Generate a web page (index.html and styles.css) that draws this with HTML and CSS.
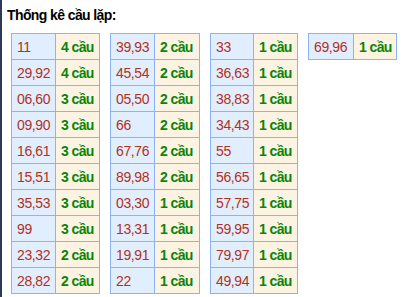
FILE: index.html
```html
<!DOCTYPE html>
<html lang="vi">
<head>
<meta charset="utf-8">
<link rel="stylesheet" href="styles.css">
</head>
<body>
<div class="page">
  <div class="title">Thống kê cầu lặp:</div>
  <div class="tables">
    <table class="t t1">
      <tr><td class="n">11</td><td class="c">4 cầu</td></tr>
      <tr><td class="n">29,92</td><td class="c">4 cầu</td></tr>
      <tr><td class="n">06,60</td><td class="c">3 cầu</td></tr>
      <tr><td class="n">09,90</td><td class="c">3 cầu</td></tr>
      <tr><td class="n">16,61</td><td class="c">3 cầu</td></tr>
      <tr><td class="n">15,51</td><td class="c">3 cầu</td></tr>
      <tr><td class="n">35,53</td><td class="c">3 cầu</td></tr>
      <tr><td class="n">99</td><td class="c">3 cầu</td></tr>
      <tr><td class="n">23,32</td><td class="c">2 cầu</td></tr>
      <tr><td class="n">28,82</td><td class="c">2 cầu</td></tr>
    </table>
    <table class="t t2">
      <tr><td class="n">39,93</td><td class="c">2 cầu</td></tr>
      <tr><td class="n">45,54</td><td class="c">2 cầu</td></tr>
      <tr><td class="n">05,50</td><td class="c">2 cầu</td></tr>
      <tr><td class="n">66</td><td class="c">2 cầu</td></tr>
      <tr><td class="n">67,76</td><td class="c">2 cầu</td></tr>
      <tr><td class="n">89,98</td><td class="c">2 cầu</td></tr>
      <tr><td class="n">03,30</td><td class="c">1 cầu</td></tr>
      <tr><td class="n">13,31</td><td class="c">1 cầu</td></tr>
      <tr><td class="n">19,91</td><td class="c">1 cầu</td></tr>
      <tr><td class="n">22</td><td class="c">1 cầu</td></tr>
    </table>
    <table class="t t3">
      <tr><td class="n">33</td><td class="c">1 cầu</td></tr>
      <tr><td class="n">36,63</td><td class="c">1 cầu</td></tr>
      <tr><td class="n">38,83</td><td class="c">1 cầu</td></tr>
      <tr><td class="n">34,43</td><td class="c">1 cầu</td></tr>
      <tr><td class="n">55</td><td class="c">1 cầu</td></tr>
      <tr><td class="n">56,65</td><td class="c">1 cầu</td></tr>
      <tr><td class="n">57,75</td><td class="c">1 cầu</td></tr>
      <tr><td class="n">59,95</td><td class="c">1 cầu</td></tr>
      <tr><td class="n">79,97</td><td class="c">1 cầu</td></tr>
      <tr><td class="n">49,94</td><td class="c">1 cầu</td></tr>
    </table>
    <table class="t t4">
      <tr><td class="n">69,96</td><td class="c">1 cầu</td></tr>
    </table>
  </div>
</div>
</body>
</html>
```
FILE: styles.css
```css
html, body {
  margin: 0;
  padding: 0;
  background: #ffffff;
}
.page {
  box-sizing: border-box;
  min-height: 297px;
  border-left: 2px solid #2c3a56;
  padding: 7px 0 0 5px;
  font-family: "Liberation Sans", Arial, sans-serif;
  font-size: 14px;
}
.title {
  font-weight: bold;
  color: #000;
  line-height: 17px;
  height: 17px;
  letter-spacing: -0.6px;
}
.tables {
  display: flex;
  align-items: flex-start;
  gap: 10px;
  margin: 9px 0 0 4px;
}
.t {
  border-collapse: separate;
  border-spacing: 0;
  border-top: 1px solid #8db3f4;
  border-left: 1px solid #8db3f4;
}
.t td {
  box-sizing: border-box;
  height: 26px;
  padding: 0 0 0 5px;
  border-right: 1px solid #8db3f4;
  border-bottom: 1px solid #8db3f4;
  white-space: nowrap;
  vertical-align: middle;
}
.t td.n {
  width: 44px;
  background: #e1eefd;
  color: #b3301c;
  letter-spacing: -0.4px;
}
.t td.c {
  width: 44px;
  background: #fdf3e2;
  color: #0a850a;
  font-weight: bold;
  letter-spacing: -0.6px;
}
.t2 td.c { width: 45px; }
.t3 td.n { width: 43px; }
.t4 td.n { width: 45px; }
.t4 td.c { width: 43px; }
```
